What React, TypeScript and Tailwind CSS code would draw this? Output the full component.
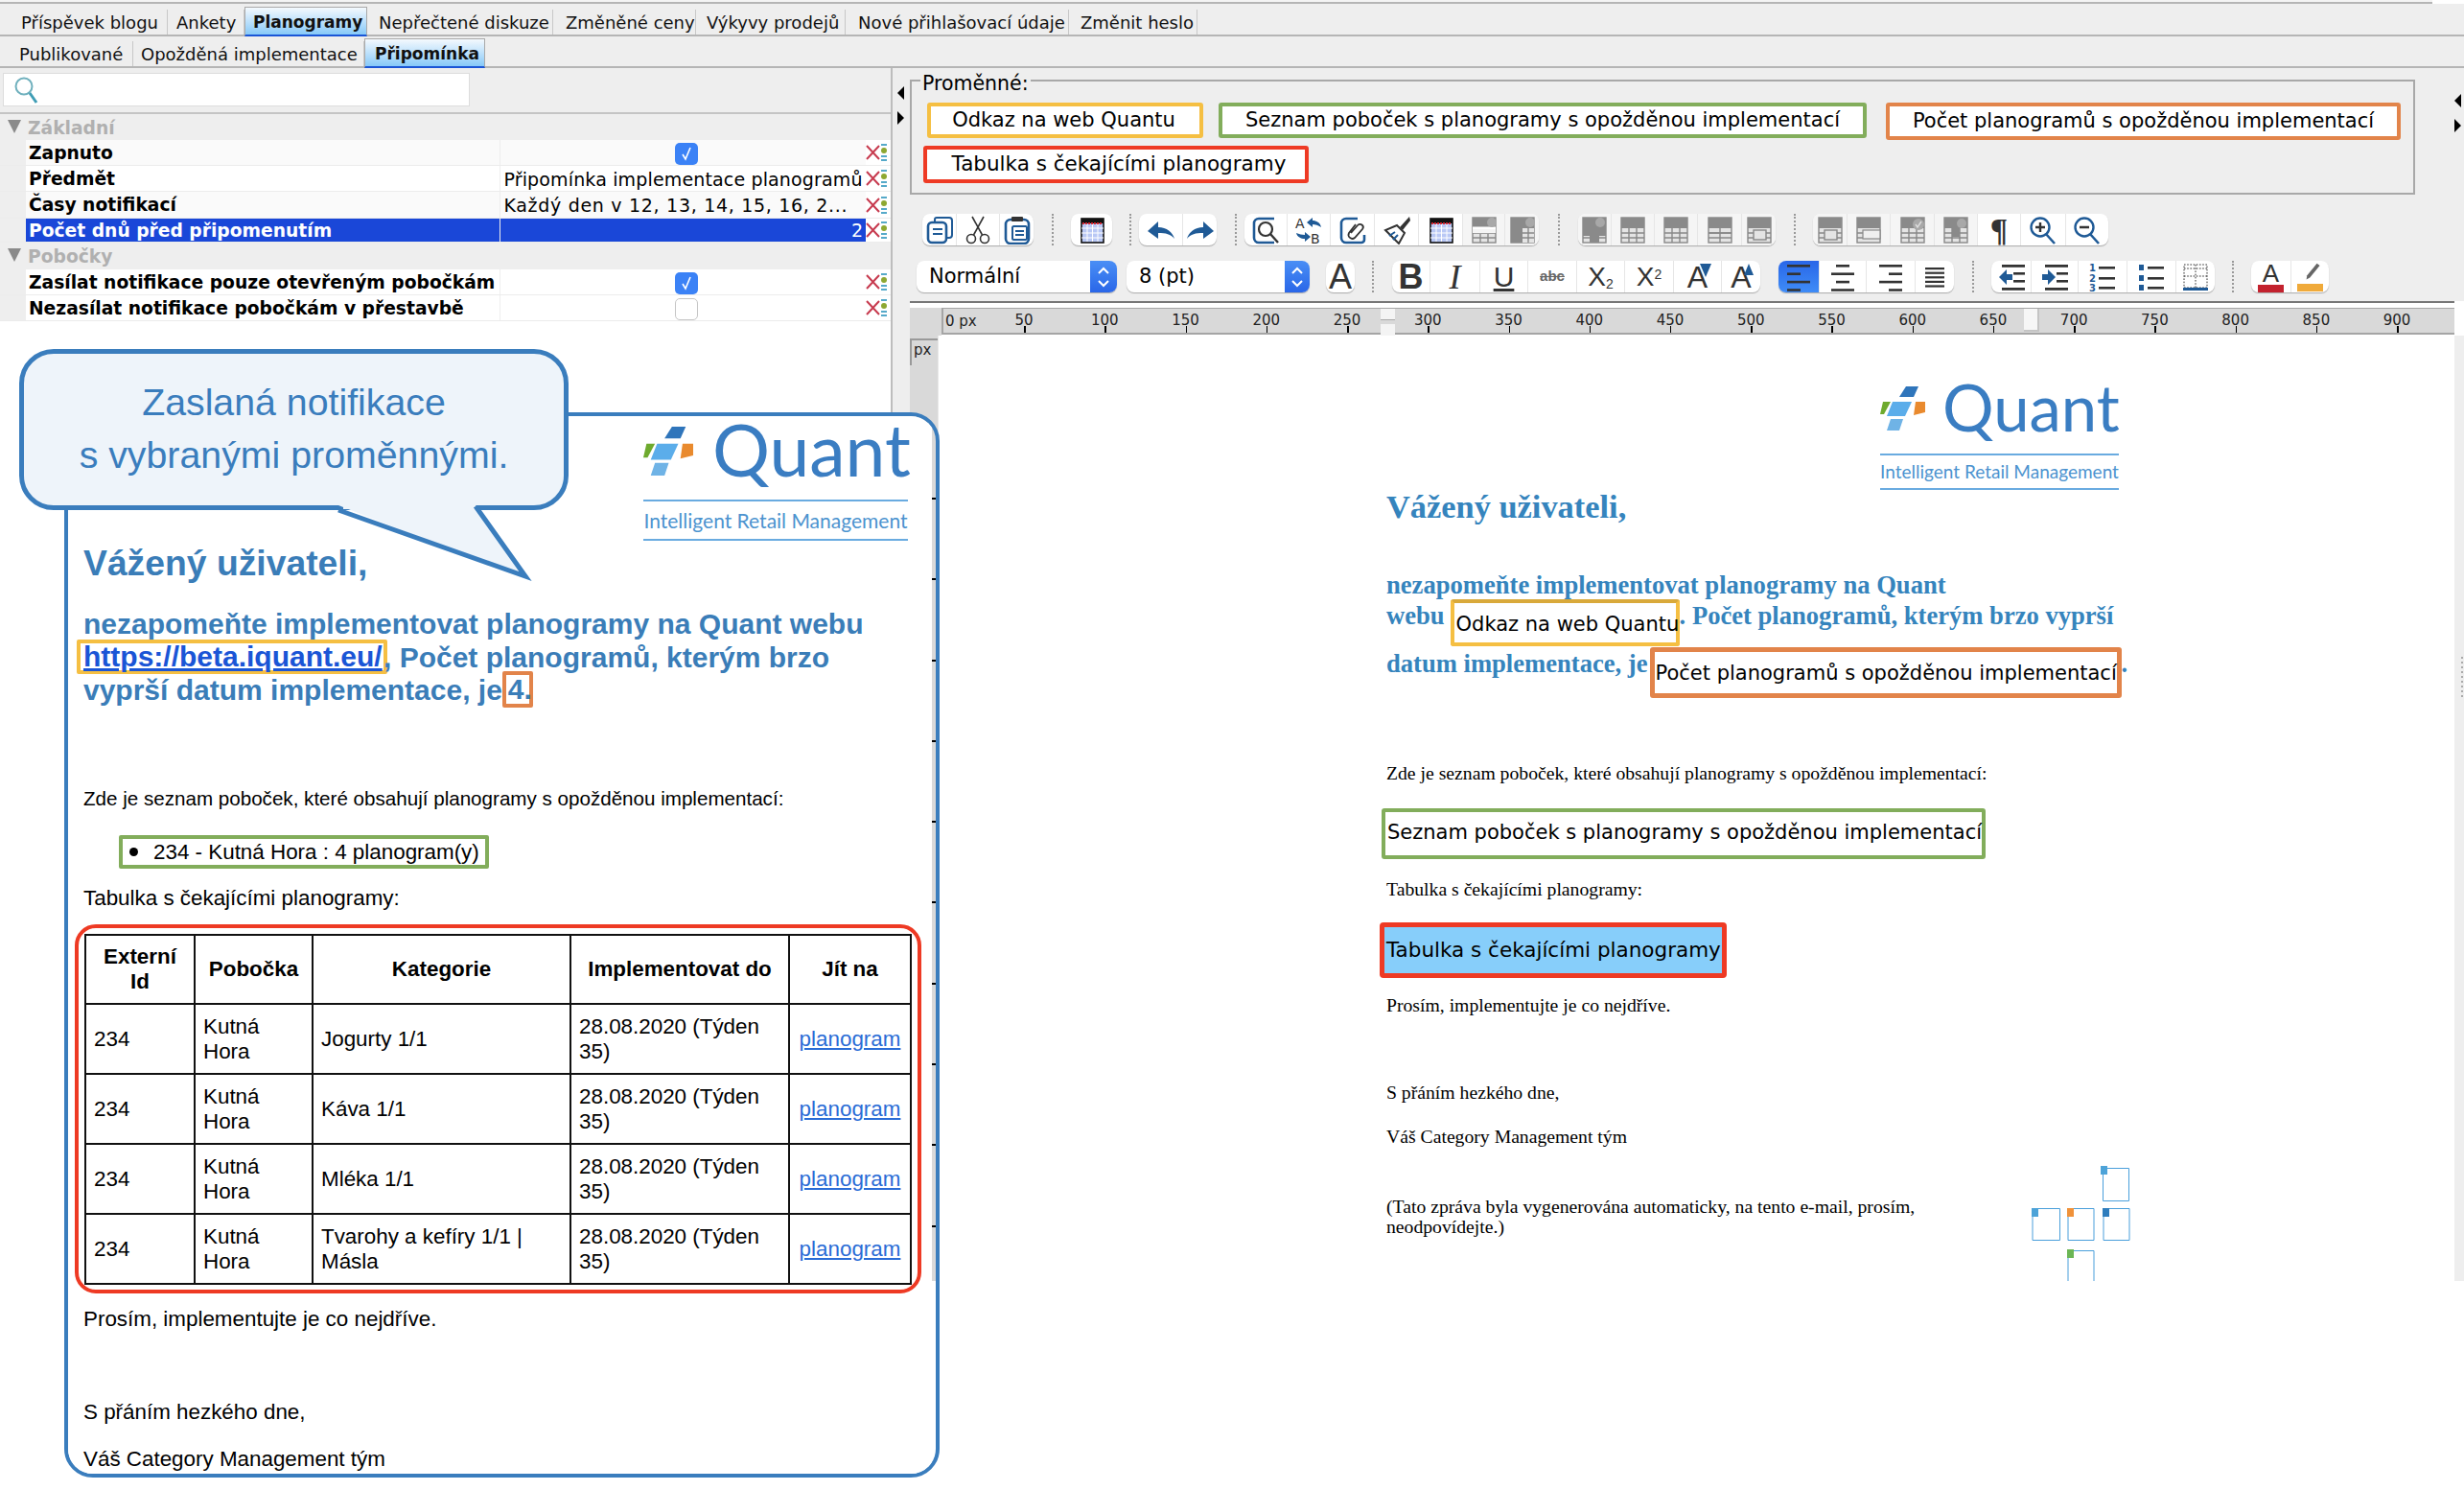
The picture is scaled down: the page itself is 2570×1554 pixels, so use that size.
import React from "react";

const B = "#1f5a96";
const D = "#333333";
const Sv = ({ children, w = 30, h = 30 }: { children: React.ReactNode; w?: number; h?: number }) => (
  <svg width={w} height={h} viewBox="0 0 30 30" fill="none">{children}</svg>
);

const Copy = () => (
  <Sv><path d="M10 6V4a2 2 0 0 1 2-2h13a3 3 0 0 1 3 3v15a3 3 0 0 1-3 3h-2" stroke={B} strokeWidth="2" /><rect x="3" y="7" width="19" height="21" rx="4" fill="#fff" stroke={B} strokeWidth="2.6" /><path d="M8 14h10M8 19h10" stroke={B} strokeWidth="2.2" /></Sv>
);
const Cut = () => (
  <Sv><circle cx="8" cy="24" r="4.5" stroke={D} strokeWidth="1.6" /><circle cx="22" cy="24" r="4.5" stroke={D} strokeWidth="1.6" /><path d="M10.5 20L21 1M19.5 20L9 1" stroke={D} strokeWidth="1.6" /></Sv>
);
const Paste = () => (
  <Sv><rect x="3" y="4" width="24" height="25" rx="5" fill="#fff" stroke={B} strokeWidth="2.6" /><rect x="9" y="1" width="12" height="5" rx="1" fill={D} /><rect x="10" y="11" width="15" height="14" rx="1.5" stroke={B} strokeWidth="2" /><path d="M13 16h9M13 20h9" stroke={B} strokeWidth="2" /></Sv>
);
const TableI = () => (
  <Sv>
    <rect x="4" y="3" width="23" height="25" fill="#b9c8f5" stroke="#111" strokeWidth="1.6" />
    <rect x="4" y="3" width="23" height="5" fill="#111" />
    <path d="M5 8h21" stroke="#d8242f" strokeWidth="2" strokeDasharray="2 1" />
    <path d="M4 13h23M4 18h23M4 23h23M10 9v18M15.5 9v18M21 9v18" stroke="#fff" strokeWidth="1" />
  </Sv>
);
const Undo = ({ flip }: { flip?: boolean }) => (
  <Sv><g transform={flip ? "translate(30 0) scale(-1 1)" : undefined}><path d="M1 16L12 6v6c9 0 15 5 17 12-4-5-9-6-17-6v6z" fill={B} /></g></Sv>
);
const Bracket = () => <path d="M24 3H8a5 5 0 0 0-5 5v15a5 5 0 0 0 5 5h16" stroke={B} strokeWidth="2.6" />;
const Find = () => (
  <Sv><Bracket /><circle cx="15" cy="14" r="7" fill="#fff" stroke={D} strokeWidth="2.2" /><path d="M20 19l8 9" stroke={D} strokeWidth="2.4" /></Sv>
);
const Replace = () => (
  <Sv>
    <text x="1" y="13" fontSize="14" fontFamily="DejaVu Sans" fill={D}>A</text>
    <text x="17" y="29" fontSize="14" fontFamily="DejaVu Sans" fill={D}>B</text>
    <path d="M28 12c-1-5-5-7-9-7V2l-6 5 6 5V9c3 0 6 1 9 3zM2 18c1 4 5 6 9 6v3l6-5-6-5v3c-3 0-6-1-9-2z" fill={B} />
  </Sv>
);
const LinkI = () => (
  <Sv>
    <path d="M20 3H8a5 5 0 0 0-5 5v15a5 5 0 0 0 5 5h16a3 3 0 0 0 3-3v-5" stroke={B} strokeWidth="2.6" />
    <path d="M13 18l7-8a3 3 0 0 1 5 4l-8 9a4 4 0 0 1-6-5l7-9" stroke={D} strokeWidth="1.8" />
  </Sv>
);
const Brush = () => (
  <Sv><path d="M28 1l-10 11 3 3L29 5z" fill={D} /><path d="M15 10l8 8-6 11L3 15z" fill="#fff" stroke={D} strokeWidth="2" /><path d="M7 21l6-4M11 25l5-5" stroke={B} strokeWidth="2" /></Sv>
);
const GT = ({ v = 0 }: { v?: number }) => (
  <Sv>
    <rect x="3" y="2" width="24" height="26" fill="#e4e4e4" stroke="#888" strokeWidth="1.4" />
    <rect x="3" y="2" width="24" height="11" fill="#8a8a8a" />
    <path d="M3 18h24M3 23h24" stroke="#888" strokeWidth="1.4" />
    {v === 0 && <path d="M11 13v15M19 13v15" stroke="#888" strokeWidth="1.4" />}
    {v === 1 && <path d="M3 18h24M15 13v15" stroke="#888" strokeWidth="1.4" />}
    {v === 2 && <><path d="M11 13v15M19 13v15" stroke="#888" strokeWidth="1.4" /><circle cx="21" cy="9" r="6" fill="#a8a8a8" /><path d="M18 9l2 3 4-6" stroke="#ddd" strokeWidth="1.4" /></>}
    {v === 3 && <rect x="9" y="15" width="13" height="10" fill="#e4e4e4" stroke="#888" strokeWidth="1.4" />}
    {v === 4 && <><path d="M3 13h24" stroke="#fff" strokeWidth="3" /><path d="M11 19v9M19 19v9" stroke="#888" strokeWidth="1.4" /><rect x="3" y="14" width="24" height="4" fill="#f4f4f4" /><circle cx="23" cy="7" r="5" fill="#a8a8a8" /></>}
    {v === 5 && <><rect x="3" y="2" width="12" height="26" fill="#8a8a8a" /><path d="M15 13h12v15H15z" fill="#e4e4e4" /><path d="M15 18h12M15 23h12M21 13v15" stroke="#888" strokeWidth="1.4" /><circle cx="23" cy="7" r="5" fill="#a8a8a8" /></>}
    {v === 6 && <><path d="M10 3h10v10h7v8h-7v7H10v-7H3v-8h7z" fill="#8a8a8a" /><circle cx="21" cy="7" r="5" fill="#a8a8a8" /></>}
    {v === 7 && <rect x="9" y="15" width="18" height="9" fill="#efefef" stroke="#888" strokeWidth="1.2" />}
    {v === 8 && <><path d="M11 13v15M19 13v15" stroke="#888" strokeWidth="1.4" /><rect x="11" y="13" width="8" height="9" fill="#8a8a8a" /><circle cx="21" cy="8" r="5" fill="#a8a8a8" /></>}
  </Sv>
);
const Mag = ({ plus }: { plus?: boolean }) => (
  <Sv><circle cx="12" cy="12" r="9.5" fill="#fff" stroke={B} strokeWidth="2.4" /><path d="M7 12h10" stroke={D} strokeWidth="2.4" />{plus && <path d="M12 7v10" stroke={D} strokeWidth="2.4" />}<path d="M18 19l9 10" stroke={B} strokeWidth="2.6" /></Sv>
);
const Align = ({ k }: { k: "l" | "c" | "r" }) => {
  const rows = k === "l" ? [[3, 24], [3, 14], [3, 24], [3, 14]] : k === "c" ? [[8, 14], [3, 24], [8, 14], [3, 24]] : [[3, 24], [13, 14], [3, 24], [13, 14]];
  return <Sv>{rows.map((r, i) => <rect key={i} x={r[0]} y={2 + i * 8.4} width={r[1]} height="2.6" fill={D} />)}</Sv>;
};
const Justify = () => <Sv>{[0, 1, 2, 3, 4].map((i) => <rect key={i} x="5" y={5 + i * 4.6} width="20" height="2.2" fill={D} />)}</Sv>;
const Indent = ({ flip }: { flip?: boolean }) => (
  <Sv>
    <rect x="5" y="2" width="24" height="2.8" fill={D} /><rect x="5" y="26" width="24" height="2.8" fill={D} />
    <rect x="17" y="10" width="12" height="2.6" fill={D} /><rect x="17" y="18" width="12" height="2.6" fill={D} />
    {flip ? <path d="M2 12h6V7l8 8-8 8v-5H2z" fill={B} /> : <path d="M16 12h-6V7l-8 8 8 8v-5h6z" fill={B} />}
  </Sv>
);
const NumList = () => (
  <Sv>
    <text x="1" y="9" fontSize="10" fontWeight="700" fontFamily="DejaVu Sans" fill={B}>1</text>
    <text x="1" y="20" fontSize="10" fontWeight="700" fontFamily="DejaVu Sans" fill={B}>2</text>
    <text x="1" y="30" fontSize="10" fontWeight="700" fontFamily="DejaVu Sans" fill={B}>3</text>
    <rect x="11" y="4" width="17" height="2.6" fill={D} /><rect x="11" y="15" width="17" height="2.6" fill={D} /><rect x="11" y="25" width="17" height="2.6" fill={D} />
  </Sv>
);
const BulList = () => (
  <Sv>
    {[2, 13, 23].map((y) => <rect key={y} x="2" y={y} width="5" height="6" fill={B} />)}
    <rect x="11" y="4" width="17" height="2.6" fill={D} /><rect x="11" y="15" width="17" height="2.6" fill={D} /><rect x="11" y="25" width="17" height="2.6" fill={D} />
  </Sv>
);
const DotTable = () => (
  <Sv>
    <path d="M3 2h24v24H3zM3 14h24M15 2v24M3 6h24" stroke={D} strokeWidth="1" strokeDasharray="1.6 1.6" />
    <rect x="2" y="26" width="26" height="3" fill={B} />
  </Sv>
);
const Pen = () => (
  <Sv w={30} h={22}><path d="M24 1l4 3-14 17-5 3 1-6z" fill="#666" /></Sv>
);

const Sep = ({ c }: { c: string }) => <div className={`h-[33px] w-0 border-l-2 border-dotted border-[#999] -mr-[1px] ${c}`} />;

type Btn = { w: string; n: React.ReactNode; a?: boolean; g?: boolean };
const Group = ({ c, items }: { c: string; items: Btn[] }) => (
  <div className={`flex h-[33px] rounded-[8px] bg-white shadow-[0_1px_1px_#aaaaaa] overflow-hidden ${c}`}>
    {items.map((b, i) => (
      <div key={i} className={`${b.w} h-full flex items-center justify-center border-l border-[#e6e6e6] first:border-l-0 ${b.a ? "bg-gradient-to-b from-[#2a66e8] to-[#3f8cf7]" : ""} ${b.g ? "bg-[#f5f5f5]" : ""}`}>
        {b.n}
      </div>
    ))}
  </div>
);

const Combo = ({ c, text, blue, w }: { c: string; text: string; blue: string; w: string }) => (
  <div className={`flex h-[33px] rounded-[8px] bg-white shadow-[0_1px_1px_#aaaaaa] overflow-hidden ${w} ${c}`}>
    <div className="flex-1 pl-[13px] flex items-center text-[21px] text-black">{text}</div>
    <div className={`${blue} flex items-center justify-center bg-gradient-to-b from-[#4a8ef5] to-[#2a66e8]`}>
      <svg width="16" height="26" viewBox="0 0 16 26" fill="none"><path d="M3 9l5-5 5 5M3 17l5 5 5-5" stroke="#fff" strokeWidth="2" /></svg>
    </div>
  </div>
);

const LetterA = ({ size = "text-[36px]", mark }: { size?: string; mark?: "d" | "u" }) => (
  <div className="relative flex items-center justify-center h-full">
    <span className={`${size} font-['Liberation_Sans',sans-serif] text-[#333] leading-none`}>A</span>
    {mark === "d" && <svg className="absolute right-[-4px] top-[3px]" width="12" height="14" viewBox="0 0 12 14"><path d="M0 0h12L6 14z" fill={B} /></svg>}
    {mark === "u" && <svg className="absolute right-[-2px] top-[3px]" width="10" height="12" viewBox="0 0 10 12"><path d="M5 0l5 12H0z" fill={B} /></svg>}
  </div>
);

const topTabs = [
  { t: "Příspěvek blogu", w: "w-[175px] pl-[22px]" },
  { t: "Ankety", w: "w-[80px] pl-[9px]" },
  { t: "Planogramy", w: "w-[128px] pl-[8px]", a: true },
  { t: "Nepřečtené diskuze", w: "w-[194px] pl-[12px]" },
  { t: "Změněné ceny", w: "w-[149px] pl-[13px]" },
  { t: "Výkyvy prodejů", w: "w-[156px] pl-[11px]" },
  { t: "Nové přihlašovací údaje", w: "w-[233px] pl-[13px]" },
  { t: "Změnit heslo", w: "w-[134px] pl-[12px]" },
];
const subTabs = [
  { t: "Publikované", w: "w-[139px] pl-[20px]" },
  { t: "Opožděná implementace", w: "w-[241px] pl-[8px]" },
  { t: "Připomínka", w: "w-[126px] pl-[10px]", a: true },
];

const TabBar = ({ tabs, h }: { tabs: { t: string; w: string; a?: boolean }[]; h: string }) => (
  <div className={`flex ${h} items-end bg-[#eeeeee] border-b-2 border-[#b5b5b5] text-[18px] text-[#111] shrink-0`}>
    {tabs.map((x) => (
      <div
        key={x.t}
        className={`${x.w} flex items-center whitespace-nowrap ${
          x.a
            ? "h-[31px] pt-[3px] font-bold text-[17px] border border-[#a9a9a9] border-b-2 border-b-[#1a55d6] bg-gradient-to-b from-[#f4f9fd] to-[#86c9f8] -mb-[2px]"
            : "h-[26px] border-r border-[#c8c8c8]"
        }`}
      >
        {x.t}
      </div>
    ))}
  </div>
);

const RowIcons = () => (
  <div className="w-[26px] h-full flex items-center bg-white">
    <svg width="15" height="18" viewBox="0 0 15 18" fill="none"><path d="M1 2l13 14M14 2L1 16" stroke="#c73b4f" strokeWidth="2" /></svg>
    <svg width="8" height="20" viewBox="0 0 8 20" fill="none"><rect x="1" y="1" width="6" height="2" fill="#55a9c9" /><circle cx="4" cy="8" r="3" fill="#8da832" /><rect x="1" y="13" width="6" height="2" fill="#55a9c9" /><rect x="1" y="17" width="6" height="2" fill="#55a9c9" /></svg>
  </div>
);

const Check = ({ on }: { on: boolean }) =>
  on ? (
    <div className="w-[24px] h-[23px] rounded-[5px] bg-[#3b82f6] flex items-center justify-center">
      <svg width="14" height="16" viewBox="0 0 14 16" fill="none"><path d="M3 9l3 5 5-12" stroke="#fff" strokeWidth="1.6" /></svg>
    </div>
  ) : (
    <div className="w-[24px] h-[23px] rounded-[5px] bg-white border border-[#c6c6c6]" />
  );

const Row = ({ name, value, sel, check, alt, h, vc = "" }: { name: string; value?: string; sel?: boolean; check?: boolean; alt?: boolean; h: string; vc?: string }) => (
  <div className={`flex ${h} border-b border-[#ececec] ${alt ? "bg-[#fafafa]" : "bg-white"}`}>
    <div className="w-[27px] bg-[#eeeeee]" />
    <div className={`w-[496px] pl-[3px] pt-[2px] flex items-center font-bold text-[18.7px] border-r border-[#eeeeee] whitespace-nowrap ${sel ? "bg-[#1a47d8] text-white" : "text-black"}`}>{name}</div>
    <div className={`w-[381px] flex items-center text-[19px] whitespace-nowrap ${sel ? "bg-[#1a47d8] text-white justify-end pr-[3px]" : "text-black pl-[3px] pt-[2px]"} ${check !== undefined ? "justify-center pl-[6px] pt-0" : ""} ${vc}`}>
      {check !== undefined ? <Check on={check} /> : value}
    </div>
    <RowIcons />
  </div>
);

const GroupRow = ({ t, h }: { t: string; h: string }) => (
  <div className={`flex ${h} bg-[#eeeeee] items-center pt-[3px]`}>
    <svg className="ml-[8px] mb-[5px]" width="15" height="14" viewBox="0 0 15 14"><path d="M0 0h14L7 14z" fill="#8a8a8a" /></svg>
    <span className="ml-[6px] font-bold text-[18.7px] text-[#b0b0b0]">{t}</span>
  </div>
);

const Chip = ({ t, c }: { t: string; c: string }) => (
  <div className={`border-[4px] rounded-[3px] bg-white flex items-center justify-center text-black whitespace-nowrap ${c}`}>{t}</div>
);

const Logo = ({ size, icon, q, tag, gap }: { size: string; icon: string; q: string; tag: string; gap: string }) => (
  <div className="flex flex-col">
    <div className={`flex items-center ${gap}`}>
      <svg className={`${icon} shrink-0`} viewBox="0 0 47 47">
        <path d="M27 1h13l-5 11H20z" fill="#2f75bb" />
        <path d="M13 17h20l-7 15H7z" fill="#5badea" />
        <path d="M3 17h8L4 30H0z" fill="#6eaa2e" />
        <path d="M37 17h10v11l-12 3z" fill="#e98a2e" />
        <path d="M11 35h13l-4 12H7z" fill="#6fb3e6" />
      </svg>
      <span className={`${q} shrink-0 font-['Lato',sans-serif] text-[#3a7dc2] leading-none`}>Quant</span>
    </div>
    <div className={size} />
    <div className={`border-y-2 border-[#69abe0] ${tag} flex items-center justify-center font-['Lato',sans-serif] text-[#4c93cf] whitespace-nowrap`}>Intelligent Retail Management</div>
  </div>
);

const Ruler = () => (
  <div className="flex-1 h-[28px] bg-[#d9d9d9] border-l-2 border-t border-b-2 border-[#a5a5a5] flex relative text-[15px] text-[#222]">
    <div className="w-[42px] pl-[2px] pt-[2px] whitespace-nowrap">0 px</div>
    {[50, 100, 150, 200, 250, 300, 350, 400, 450, 500, 550, 600, 650, 700, 750, 800, 850, 900].map((n) => (
      <div key={n} className="w-[84.24px] shrink-0 flex flex-col items-center pt-[2px] relative">
        <span className="leading-[20px]">{n}</span>
        <span className="absolute bottom-0 left-1/2 w-[1.5px] h-[7px] bg-black" />
      </div>
    ))}
    <div className="absolute left-[456px] top-0 w-[15px] h-[12px] bg-[#f4f4f4] border-b border-[#aaa]" />
    <div className="absolute left-[456px] top-[16px] w-[15px] h-[14px] bg-[#f4f4f4]" />
    <div className="absolute left-[1127px] top-0 w-[16px] h-[24px] bg-[#f6f6f6] border-r-2 border-b-2 border-[#c4c4c4]" />
  </div>
);

const Squares = () => (
  <svg className="absolute left-[1137px] top-[866px]" width="104" height="120" viewBox="0 0 104 120" fill="none">
    <g stroke="#4a9fdb" strokeWidth="1">
      <path d="M2.5 2.5H29.5V36.5H2.5z" transform="translate(72 0)" />
      <path d="M1 44.5H29.5V77.5H1z" />
      <path d="M38 44.5H65V77.5H38z" />
      <path d="M75 44.5H102V77.5H75z" />
      <path d="M38 120V88.5H65V120" />
    </g>
    <rect x="72" y="0" width="7" height="9" fill="#4da3d8" />
    <rect x="0" y="44" width="7" height="9" fill="#4da3d8" />
    <rect x="37" y="44" width="7" height="9" fill="#f0923a" />
    <rect x="74" y="44" width="7" height="9" fill="#2f7dbd" />
    <rect x="37" y="87" width="7" height="9" fill="#6cb655" />
  </svg>
);

const Doc = () => (
  <div className="flex-1 bg-white relative font-['Liberation_Serif',serif] pl-[464px]">
    <div className="ml-[515px] w-[249px] mt-[52px]">
      <Logo size="h-[24px]" icon="w-[47px] h-[47px]" gap="gap-[18px]" q="text-[67px] h-[49px] -mt-[6px] -translate-y-[7px]" tag="h-[38px] text-[19px]" />
    </div>
    <div className="h-[40px] -mt-[3px] leading-[40px] font-bold text-[34.4px] text-[#3584bd]">Vážený uživateli,</div>
    <div className="mt-[46px] h-[32px] leading-[32px] font-bold text-[26.6px] text-[#3584bd] whitespace-nowrap">nezapomeňte implementovat planogramy na Quant</div>
    <div className="-mt-[1px] flex h-[50px] font-bold text-[26.6px] leading-[34px] text-[#3584bd] whitespace-nowrap">
      <span>webu</span>
      <div className="ml-[6px] w-[239px] h-[49px] border-[4px] border-[#f5bf42] rounded-[3px] bg-white border-t-[#d9a93a] pl-[2px] font-['DejaVu_Sans',sans-serif] font-normal text-[21px] text-black leading-[44px]">Odkaz na web Quantu</div>
      <span>. Počet planogramů, kterým brzo vyprší</span>
    </div>
    <div className="flex h-[53px] font-bold text-[26.6px] leading-[34px] text-[#3584bd] whitespace-nowrap">
      <span>datum implementace, je</span>
      <div className="ml-[2px] w-[492px] h-[53px] border-[5px] border-[#e2844a] rounded-[3px] bg-white pl-[1px] font-['DejaVu_Sans',sans-serif] font-normal text-[21px] text-black leading-[44px]">Počet planogramů s opožděnou implementací</div>
      <span>.</span>
    </div>
    <div className="mt-[66px] leading-[24px] text-[19.7px] text-black whitespace-nowrap">Zde je seznam poboček, které obsahují planogramy s opožděnou implementací:</div>
    <div className="mt-[25px] -ml-[5px] w-[630px] h-[53px] border-[4px] border-[#82ad5b] rounded-[3px] bg-white pl-[2px] font-['DejaVu_Sans',sans-serif] text-[21px] text-black leading-[43px] whitespace-nowrap">Seznam poboček s planogramy s opožděnou implementací</div>
    <div className="mt-[19px] leading-[24px] text-[19.7px] text-black">Tabulka s čekajícími planogramy:</div>
    <div className="mt-[23px] -ml-[7px] w-[362px] h-[58px] border-[5px] border-[#ee3a24] rounded-[4px] bg-[#87cefa] pl-[2px] font-['DejaVu_Sans',sans-serif] text-[21.5px] text-black leading-[47px] whitespace-nowrap">Tabulka s čekajícími planogramy</div>
    <div className="mt-[16px] leading-[24px] text-[19.7px] text-black">Prosím, implementujte je co nejdříve.</div>
    <div className="mt-[67px] leading-[24px] text-[19.7px] text-black">S přáním hezkého dne,</div>
    <div className="mt-[22px] leading-[24px] text-[19.7px] text-black">Váš Category Management tým</div>
    <div className="mt-[51px] leading-[21px] text-[19.7px] text-black w-[570px]">(Tato zpráva byla vygenerována automaticky, na tento e-mail, prosím, neodpovídejte.)</div>
    <Squares />
  </div>
);

const cellCls = "border-2 border-[#111] px-[8px] text-left align-middle leading-[26px]";
const rows = ["Jogurty 1/1", "Káva 1/1", "Mléka 1/1", "Tvarohy a kefíry 1/1 | Másla"];

const Card = () => (
  <div className="absolute left-[67px] top-[430px] w-[913px] h-[1111px] rounded-[30px] border-[4px] border-[#3a7dbd] font-['Liberation_Sans',sans-serif] overflow-hidden">
    <div className="w-[901px] h-full bg-white pl-[16px] flex flex-col">
      <div className="ml-[584px] w-[276px] mt-[10px] shrink-0">
        <Logo size="h-[25px]" icon="w-[52px] h-[52px]" gap="gap-[20px]" q="text-[75px] h-[55px] -mt-[8px] -translate-y-[8px]" tag="h-[43px] text-[21px]" />
      </div>
      <div className="mt-[1px] h-[44px] leading-[44px] font-bold text-[37.3px] text-[#3a7db8]">Vážený uživateli,</div>
      <div className="mt-[25px] h-[34px] leading-[34px] font-bold text-[30px] text-[#3a7db8] whitespace-nowrap">nezapomeňte implementovat planogramy na Quant webu</div>
      <div className="flex items-center h-[34px] font-bold text-[30px] text-[#3a7db8] whitespace-nowrap">
        <div className="-ml-[7px] w-[324px] h-[36px] border-[4px] border-[#f5bf42] rounded-[2px] pl-[3px] text-[#1a55d6] underline leading-[28px]">https://beta.iquant.eu/</div>
        <span className="-ml-[4px]">, Počet planogramů, kterým brzo</span>
      </div>
      <div className="flex items-center h-[34px] font-bold text-[30px] text-[#3a7db8] whitespace-nowrap">
        <span>vyprší datum implementace, je</span>
        <div className="w-[32px] h-[38px] border-[4px] border-[#e2844a] rounded-[2px] pl-[2px] leading-[30px]">4.</div>
      </div>
      <div className="mt-[85px] leading-[24px] text-[20.6px] text-black whitespace-nowrap">Zde je seznam poboček, které obsahují planogramy s opožděnou implementací:</div>
      <div className="mt-[26px] ml-[37px] w-[386px] h-[35px] border-[4px] border-[#82ad5b] rounded-[2px] flex items-center text-[22.4px] text-black whitespace-nowrap shrink-0">
        <span className="ml-[7px] w-[9px] h-[9px] rounded-full bg-black" />
        <span className="ml-[16px]">234 - Kutná Hora : 4 planogram(y)</span>
      </div>
      <div className="mt-[19px] leading-[24px] text-[22.4px] text-black">Tabulka s čekajícími planogramy:</div>
      <div className="mt-[15px] -ml-[9px] w-[883px] h-[385px] shrink-0 border-[4px] border-[#ee3a24] rounded-[22px] pl-[6px] pt-[6px]">
        <table className="table-fixed border-collapse w-[861px] text-[22.4px] text-black">
          <colgroup>
            <col className="w-[114px]" />
            <col className="w-[123px]" />
            <col className="w-[269px]" />
            <col className="w-[228px]" />
            <col className="w-[127px]" />
          </colgroup>
          <thead>
            <tr className="h-[72px]">
              {["Externí Id", "Pobočka", "Kategorie", "Implementovat do", "Jít na"].map((h) => (
                <th key={h} className="border-2 border-[#111] px-[8px] text-center align-middle font-bold leading-[26px]">{h}</th>
              ))}
            </tr>
          </thead>
          <tbody>
            {rows.map((k) => (
              <tr key={k} className="h-[73px]">
                <td className={cellCls}>234</td>
                <td className={cellCls}>Kutná<br />Hora</td>
                <td className={cellCls}>{k}</td>
                <td className={cellCls}>28.08.2020 (Týden 35)</td>
                <td className="border-2 border-[#111] text-center align-middle text-[#2a6cd6] underline">planogram</td>
              </tr>
            ))}
          </tbody>
        </table>
      </div>
      <div className="mt-[15px] leading-[24px] text-[22.4px] text-black">Prosím, implementujte je co nejdříve.</div>
      <div className="mt-[73px] leading-[24px] text-[22.4px] text-black">S přáním hezkého dne,</div>
      <div className="mt-[25px] leading-[24px] text-[22.4px] text-black">Váš Category Management tým</div>
    </div>
  </div>
);

const Callout = () => (
  <div className="absolute left-[20px] top-[364px] w-[573px] h-[168px] rounded-[36px] border-[5px] border-[#3a7dbd] bg-[#eef4fa] flex flex-col items-center justify-center pb-[3px] font-['Liberation_Sans',sans-serif] text-[39.3px] leading-[55px] text-[#3a7dbd]">
    <div>Zaslaná notifikace</div>
    <div>s vybranými proměnnými.</div>
    <svg className="absolute left-[325px] top-[158px]" width="215" height="84" viewBox="0 0 215 84" fill="none">
      <path d="M3 0L203 78 146 0" fill="#eef4fa" />
      <path d="M3 5L198 74 146 1" stroke="#3a7dbd" strokeWidth="5" />
      <path d="M8 0H142V4H8z" fill="#eef4fa" />
    </svg>
  </div>
);

const Arrows = ({ c }: { c: string }) => (
  <div className={`flex flex-col gap-[12px] ${c}`}>
    <svg width="7" height="14" viewBox="0 0 7 14"><path d="M7 0v14L0 7z" fill="#000" /></svg>
    <svg width="7" height="14" viewBox="0 0 7 14"><path d="M0 0v14l7-7z" fill="#000" /></svg>
  </div>
);

export default function App() {
  return (
    <div className="relative w-[2570px] h-[1554px] overflow-hidden bg-white font-['DejaVu_Sans',sans-serif] flex flex-col">
      <div className="h-[4px] bg-[#f4f4f4] border-b-2 border-[#b5b5b5] mr-[33px] shrink-0" />
      <TabBar tabs={topTabs} h="h-[34px]" />
      <TabBar tabs={subTabs} h="h-[33px]" />
      <div className="flex h-[1265px] shrink-0">
        <div className="w-[931px] flex flex-col border-r-2 border-[#bdbdbd] bg-white">
          <div className="h-[48px] bg-[#eeeeee] border-b-2 border-[#c4c4c4] pl-[3px] pt-[5px]">
            <div className="w-[487px] h-[35px] bg-white border border-[#dddddd] pl-[10px] flex items-center">
              <svg width="28" height="30" viewBox="0 0 28 30" fill="none"><circle cx="11" cy="11" r="8.5" stroke="#6fb0bd" strokeWidth="2" /><path d="M17 18l7 10" stroke="#3f9db5" strokeWidth="3" /></svg>
            </div>
          </div>
          <GroupRow t="Základní" h="h-[27px]" />
          <Row name="Zapnuto" check={true} alt h="h-[27px]" />
          <Row name="Předmět" value="Připomínka implementace planogramů" vc="tracking-[0.15px]" h="h-[27px]" />
          <Row name="Časy notifikací" value="Každý den v 12, 13, 14, 15, 16, 2..." vc="tracking-[0.7px]" alt h="h-[28px]" />
          <Row name="Počet dnů před připomenutím" value="2" sel h="h-[25px]" />
          <GroupRow t="Pobočky" h="h-[28px]" />
          <Row name="Zasílat notifikace pouze otevřeným pobočkám" check={true} h="h-[27px]" />
          <Row name="Nezasílat notifikace pobočkám v přestavbě" check={false} h="h-[27px]" />
        </div>
        <div className="w-[18px] bg-[#eeeeee]">
          <Arrows c="ml-[5px] mt-[19px]" />
        </div>
        <div className="flex-1 flex flex-col">
          <div className="h-[243px] bg-[#eeeeee] flex flex-col shrink-0">
            <div className="flex mt-[12px]">
              <div className="relative w-[1570px] h-[120px] border-2 border-[#a8a8a8] border-b-[#a8a8a8]">
                <span className="absolute left-[9px] -top-[10px] bg-[#eeeeee] px-[2px] text-[20.5px] leading-[24px] text-black">Proměnné:</span>
                <div className="flex mt-[22px] ml-[16px]">
                  <Chip t="Odkaz na web Quantu" c="w-[288px] h-[37px] pr-[3px] border-[#f5bf42] text-[21px]" />
                  <Chip t="Seznam poboček s planogramy s opožděnou implementací" c="ml-[16px] w-[676px] h-[37px] border-[#82ad5b] text-[21px]" />
                  <Chip t="Počet planogramů s opožděnou implementací" c="ml-[20px] w-[537px] h-[39px] border-[#e2844a] text-[21px]" />
                </div>
                <div className="flex mt-[6px] ml-[12px]">
                  <Chip t="Tabulka s čekajícími planogramy" c="w-[402px] h-[39px] pl-[6px] border-[#ee3a24] text-[21.5px]" />
                </div>
              </div>
              <Arrows c="ml-[41px] mt-[15px]" />
            </div>
            <div className="flex items-center mt-[20px] h-[33px] pl-[13px]">
              <Group c="" items={[{ w: "w-[35px]", n: <Copy /> }, { w: "w-[45px]", n: <Cut /> }, { w: "w-[36px]", n: <Paste /> }]} />
              <Sep c="ml-[19px]" />
              <Group c="ml-[19px]" items={[{ w: "w-[43px]", n: <TableI /> }]} />
              <Sep c="ml-[18px]" />
              <Group c="ml-[9px]" items={[{ w: "w-[45px]", n: <Undo /> }, { w: "w-[36px]", n: <Undo flip /> }]} />
              <Sep c="ml-[19px]" />
              <Group c="ml-[9px]" items={[{ w: "w-[44px]", n: <Find /> }, { w: "w-[45px]", n: <Replace /> }, { w: "w-[46px]", n: <LinkI /> }, { w: "w-[46px]", n: <Brush /> }, { w: "w-[46px]", n: <TableI /> }, { w: "w-[44px]", n: <GT v={4} />, g: true }, { w: "w-[36px]", n: <GT v={5} />, g: true }]} />
              <Sep c="ml-[20px]" />
              <Group c="ml-[20px]" items={[{ w: "w-[34px]", n: <GT v={6} />, g: true }, { w: "w-[45px]", n: <GT v={0} />, g: true }, { w: "w-[45px]", n: <GT v={0} />, g: true }, { w: "w-[46px]", n: <GT v={1} />, g: true }, { w: "w-[36px]", n: <GT v={3} />, g: true }]} />
              <Sep c="ml-[19px]" />
              <Group c="ml-[19px]" items={[{ w: "w-[35px]", n: <GT v={3} />, g: true }, { w: "w-[45px]", n: <GT v={7} />, g: true }, { w: "w-[46px]", n: <GT v={2} />, g: true }, { w: "w-[45px]", n: <GT v={8} />, g: true }, { w: "w-[45px]", n: <span className="font-['Liberation_Serif',serif] font-bold text-[34px] leading-none text-[#333]">¶</span> }, { w: "w-[47px]", n: <Mag plus /> }, { w: "w-[45px]", n: <Mag /> }]} />
            </div>
            <div className="flex items-center mt-[16px] h-[33px] pl-[7px]">
              <Combo c="" w="w-[209px]" blue="w-[28px]" text="Normální" />
              <Combo c="ml-[10px]" w="w-[191px]" blue="w-[26px]" text="8 (pt)" />
              <Group c="ml-[17px]" items={[{ w: "w-[30px]", n: <LetterA /> }]} />
              <Sep c="ml-[18px]" />
              <Group
                c="ml-[20px]"
                items={[
                  { w: "w-[39px]", n: <span className="font-['Liberation_Sans',sans-serif] font-bold text-[36px] leading-none text-[#333]">B</span> },
                  { w: "w-[52px]", n: <span className="font-['Liberation_Serif',serif] italic text-[36px] leading-none text-[#333]">I</span> },
                  { w: "w-[50px]", n: <span className="font-['Liberation_Sans',sans-serif] text-[30px] leading-none text-[#333] underline">U</span> },
                  { w: "w-[51px]", n: <span className="font-['Liberation_Sans',sans-serif] font-bold text-[15px] text-[#666] line-through">abc</span> },
                  { w: "w-[50px]", n: <span className="font-['Liberation_Sans',sans-serif] text-[28px] leading-none text-[#333]">X<sub className="text-[14px]">2</sub></span> },
                  { w: "w-[51px]", n: <span className="font-['Liberation_Sans',sans-serif] text-[28px] leading-none text-[#333]">X<sup className="text-[14px]">2</sup></span> },
                  { w: "w-[50px]", n: <LetterA size="text-[32px]" mark="d" /> },
                  { w: "w-[41px]", n: <LetterA size="text-[32px]" mark="u" /> },
                ]}
              />
              <Group c="ml-[19px]" items={[{ w: "w-[42px]", n: <Align k="l" />, a: true }, { w: "w-[49px]", n: <Align k="c" /> }, { w: "w-[51px]", n: <Align k="r" /> }, { w: "w-[41px]", n: <Justify /> }]} />
              <Sep c="ml-[19px]" />
              <Group c="ml-[19px]" items={[{ w: "w-[41px]", n: <Indent /> }, { w: "w-[49px]", n: <Indent flip /> }, { w: "w-[51px]", n: <NumList /> }, { w: "w-[51px]", n: <BulList /> }, { w: "w-[41px]", n: <DotTable /> }]} />
              <Sep c="ml-[18px]" />
              <Group
                c="ml-[19px]"
                items={[
                  { w: "w-[41px]", n: <div className="flex flex-col items-center"><span className="font-['Liberation_Sans',sans-serif] text-[26px] leading-[24px] text-[#333]">A</span><span className="w-[27px] h-[8px] bg-[#c3222e]" /></div> },
                  { w: "w-[40px]", n: <div className="flex flex-col items-center"><Pen /><span className="w-[27px] h-[8px] bg-[#f0aa3a]" /></div> },
                ]}
              />
            </div>
          </div>
          <div className="flex-1 flex flex-col">
            <div className="flex h-[36px] pt-[5px] border-t-2 border-[#777] mr-[10px] bg-white shrink-0">
              <div className="w-[33px] h-[31px] bg-[#d9d9d9]" />
              <Ruler />
            </div>
            <div className="flex flex-1">
              <div className="w-[30px] bg-[#d9d9d9] flex flex-col border-r border-[#e9e9e9]">
                <div className="h-[28px] mt-[3px] border-2 border-[#9a9a9a] border-r-0 border-b-0 text-[15px] leading-[20px] pl-[2px] text-[#222]">px</div>
                <div className="flex flex-col items-end gap-[82.3px] mt-[138px]">
                  {[0, 1, 2, 3, 4, 5, 6, 7, 8, 9].map((i) => <span key={i} className="w-[8px] h-[2px] bg-black" />)}
                </div>
              </div>
              <div className="w-[3px] bg-white" />
              <Doc />
              <div className="w-[10px] bg-[#eeeeee] flex flex-col items-end gap-[3px] pr-[1px] pt-[335px]">
                {[0, 1, 2, 3, 4, 5, 6, 7, 8].map((i) => <span key={i} className="w-[2px] h-[2px] bg-[#aaaaaa]" />)}
              </div>
            </div>
          </div>
        </div>
      </div>
      <Card />
      <Callout />
    </div>
  );
}
